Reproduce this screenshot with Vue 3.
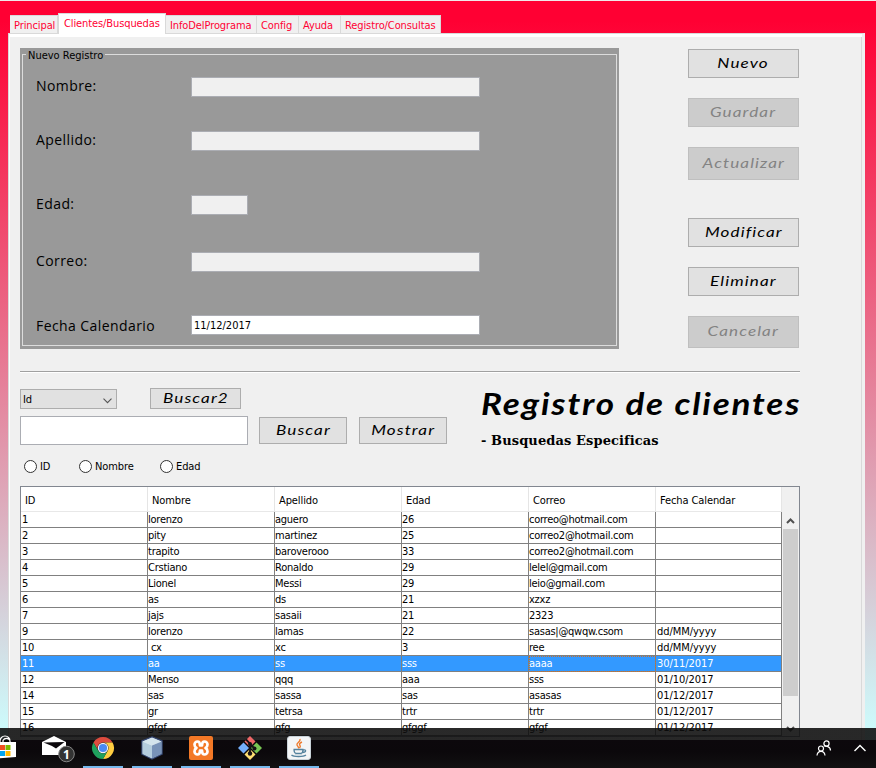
<script setup>
import { ref } from 'vue'

const tabs = [
  { label: 'Principal', w: 48 },
  { label: 'Clientes/Busquedas', w: 108, active: true },
  { label: 'InfoDelPrograma', w: 91 },
  { label: 'Config', w: 42 },
  { label: 'Ayuda', w: 42 },
  { label: 'Registro/Consultas', w: 100 },
]
const fields = [
  { label: 'Nombre:', value: '' },
  { label: 'Apellido:', value: '' },
  { label: 'Edad:', value: '', short: true },
  { label: 'Correo:', value: '' },
  { label: 'Fecha Calendario', value: '11/12/2017', enabled: true },
]
const actions = [
  { label: 'Nuevo' },
  { label: 'Guardar', off: true },
  { label: 'Actualizar', off: true },
  { label: 'Modificar' },
  { label: 'Eliminar' },
  { label: 'Cancelar', off: true },
]
const columns = ['ID', 'Nombre', 'Apellido', 'Edad', 'Correo', 'Fecha Calendar']
const rows = [
  ['1', 'lorenzo', 'aguero', '26', 'correo@hotmail.com', ''],
  ['2', 'pity', 'martinez', '25', 'correo2@hotmail.com', ''],
  ['3', 'trapito', 'baroverooo', '33', 'correo2@hotmail.com', ''],
  ['4', 'Crstiano', 'Ronaldo', '29', 'lelel@gmail.com', ''],
  ['5', 'Lionel', 'Messi', '29', 'leio@gmail.com', ''],
  ['6', 'as', 'ds', '21', 'xzxz', ''],
  ['7', 'jajs', 'sasaii', '21', '2323', ''],
  ['9', 'lorenzo', 'lamas', '22', 'sasas|@qwqw.csom', 'dd/MM/yyyy'],
  ['10', ' cx', 'xc', '3', 'ree', 'dd/MM/yyyy'],
  ['11', 'aa', 'ss', 'sss', 'aaaa', '30/11/2017'],
  ['12', 'Menso', 'qqq', 'aaa', 'sss', '01/10/2017'],
  ['14', 'sas', 'sassa', 'sas', 'asasas', '01/12/2017'],
  ['15', 'gr', 'tetrsa', 'trtr', 'trtr', '01/12/2017'],
  ['16', 'gfgf', 'gfg', 'gfggf', 'gfgf', '01/12/2017'],
]
const selected = ref(9)
</script>

<template>
  <div class="window">
    <nav class="tabs">
      <div v-for="t in tabs" :key="t.label" class="tab" :class="{ active: t.active }" :style="{ width: t.w + 'px' }">{{ t.label }}</div>
    </nav>
    <main class="pane">
      <section class="top">
        <div class="form-box">
          <div class="form-frame">
            <span class="legend">Nuevo Registro</span>
            <div class="form-grid">
              <template v-for="f in fields" :key="f.label">
                <label class="lbl" :class="{ low: f.enabled }">{{ f.label }}</label>
                <div class="field" :class="{ short: f.short, enabled: f.enabled }">{{ f.value }}</div>
              </template>
            </div>
          </div>
        </div>
        <div class="actions">
          <button v-for="a in actions" :key="a.label" class="btn" :class="{ off: a.off }"><span>{{ a.label }}</span></button>
        </div>
      </section>
      <hr class="sep" />
      <section class="search">
        <div class="search-left">
          <div class="line1">
            <div class="combo">Id
              <svg width="9" height="6" viewBox="0 0 9 6"><path d="M.5 .7 4.5 4.7 8.5 .7" fill="none" stroke="#555" stroke-width="1.1" /></svg>
            </div>
            <button class="btn b2"><span>Buscar2</span></button>
          </div>
          <div class="line2">
            <div class="query"></div>
            <button class="btn"><span>Buscar</span></button>
            <button class="btn"><span>Mostrar</span></button>
          </div>
          <div class="radios">
            <label class="r1"><i></i>ID</label>
            <label class="r2"><i></i>Nombre</label>
            <label><i></i>Edad</label>
          </div>
        </div>
        <div class="titles">
          <h1>Registro de clientes</h1>
          <h2>- Busquedas Especificas</h2>
        </div>
      </section>
      <section class="table">
        <div class="grid">
          <div class="head">
            <div v-for="c in columns" :key="c">{{ c }}</div>
          </div>
          <div v-for="(r, i) in rows" :key="i" class="row" :class="{ sel: i === selected }">
            <div v-for="(c, j) in r" :key="j" :class="{ focus: i === selected && j === 4 }">{{ c }}</div>
          </div>
          <div class="row last"><div v-for="c in columns" :key="c"></div></div>
        </div>
        <div class="scroll">
          <svg width="9" height="6" viewBox="0 0 9 6"><path d="M1 5 4.5 1.5 8 5" fill="none" stroke="#505050" stroke-width="2" /></svg>
          <div class="thumb"></div>
          <svg class="down" width="9" height="6" viewBox="0 0 9 6"><path d="M1 1 4.5 4.5 8 1" fill="none" stroke="#505050" stroke-width="2" /></svg>
        </div>
      </section>
    </main>

    <footer class="taskbar">
      <div class="app store">
        <svg width="26" height="26" viewBox="0 0 26 26">
          <path d="M10 8V6a5 5 0 0 1 10 0v2M13 8V5.500a4 4 0 0 1 7 0" fill="none" stroke="#fff" stroke-width="1.2" />
          <path d="M1 7h25v15l-25 2z" fill="#fff" />
          <path d="M9 10h6v5H9z" fill="#f25022" /><path d="M15.500 10h5v5h-5z" fill="#7fba00" />
          <path d="M9 16h6v5H9z" fill="#00a4ef" /><path d="M15.500 16h5v5h-5z" fill="#ffb900" />
        </svg>
      </div>
      <div class="app mail">
        <svg width="34" height="30" viewBox="0 0 34 30">
          <path d="M0 9 12 3 24 9V22H0z" fill="#fff" />
          <path d="M1.500 9.500 22.500 9 14 15.500 10 13z" fill="#0b080c" />
          <circle cx="24.500" cy="21" r="7.800" fill="#333" stroke="#858585" stroke-width="1" />
          <text x="24.300" y="25.500" text-anchor="middle" class="badge">1</text>
        </svg>
      </div>
      <div class="app open">
        <svg width="24" height="24" viewBox="-12 -12 24 24">
          <path d="M-9.530 -5.500A11 11 0 0 1 9.530 -5.500H0A5.500 5.500 0 0 0 -4.760 2.750z" fill="#dd4b3e" />
          <path d="M9.530 -5.500A11 11 0 0 1 0 11L4.760 2.750A5.500 5.500 0 0 0 0 -5.500z" fill="#ffcd41" />
          <path d="M0 11A11 11 0 0 1 -9.530 -5.500L-4.760 2.750A5.500 5.500 0 0 0 4.760 2.750z" fill="#1fa15d" />
          <circle r="5.200" fill="#f4f4f4" /><circle r="4.100" fill="#4a8af4" />
        </svg>
      </div>
      <div class="app open">
        <svg width="24" height="24" viewBox="0 0 24 24">
          <path d="M12 1 22 5V18L12 23 2 18V5z" fill="#fff" stroke="#33456f" stroke-width="1.500" />
          <path d="M12 1.500 21.500 5.500 12 9.500 2.500 5.500z" fill="#d4e5ed" />
          <path d="M2.500 5.500 12 9.500V22.500L2.500 18z" fill="#b4cddd" />
          <path d="M12 9.500 21.500 5.500V18L12 22.500z" fill="#7893b8" />
        </svg>
      </div>
      <div class="app open">
        <svg width="24" height="24" viewBox="0 0 24 24">
          <rect width="24" height="24" rx="2" fill="#f37826" />
          <path d="M8.500 5.500a3 3 0 0 0-3 3c0 2 1 3 2 3.500-1 .5-2 1.500-2 3.500a3 3 0 0 0 3 3c2 0 2.500-1.500 2.500-4h2c0 2.500.5 4 2.500 4a3 3 0 0 0 3-3c0-2-1-3-2-3.500 1-.5 2-1.500 2-3.500a3 3 0 0 0-3-3c-2 0-2.500 1.500-2.500 4h-2c0-2.500-.5-4-2.500-4z" fill="none" stroke="#fff" stroke-width="2.700" stroke-linejoin="round" />
        </svg>
      </div>
      <div class="app open">
        <svg width="24" height="24" viewBox="0 0 24 24">
          <path d="M12 0 17.500 5.500 12 11 6.500 5.500z" fill="#f06868" />
          <path d="M18.500 6.500 24 12 18.500 17.500 13 12z" fill="#78c553" />
          <path d="M12 13 17.500 18.500 12 24 6.500 18.500z" fill="#ffdf72" />
          <path d="M5.500 6.500 11 12 5.500 17.500 0 12z" fill="#74aefb" />
          <path d="M8 3.500 12 7.500V17M12 8 16.500 12.500" fill="none" stroke="#151015" stroke-width="1.800" />
          <circle cx="12" cy="8" r="2" fill="#151015" /><circle cx="16.500" cy="12.500" r="2" fill="#151015" /><circle cx="12" cy="17.500" r="2.200" fill="#151015" />
        </svg>
      </div>
      <div class="app open">
        <svg width="24" height="24" viewBox="0 0 24 24">
          <rect x=".5" y=".5" width="23" height="23" rx="2.500" fill="#f3f5f6" stroke="#c9d2d8" />
          <path d="M13 3c1 3-4 4-3 6 .5 1.200 2 2 1.500 3.500M15 6c-2.500 1-3 2-2 3.500.8 1.200 0 2-.5 2.500" fill="none" stroke="#ee7b2d" stroke-width="1.400" />
          <path d="M6.500 13.500h10M7 13.500c0 2 .5 3.500 2 4h5c1.500-.5 2-2 2-4M16.500 14c3-.8 3 2.300-1 2.500M4.500 19c2 2 12 2 14.500 0M8 17.500h7" fill="none" stroke="#54829d" stroke-width="1.300" />
        </svg>
      </div>
      <div class="tray">
        <svg width="16" height="16" viewBox="0 0 16 16" fill="none" stroke="#fff" stroke-width="1.200">
          <circle cx="10.500" cy="3.500" r="2.600" /><path d="M8.500 6.500C9.500 6 14.500 6 14.500 10.500" />
          <circle cx="5" cy="8.500" r="2.500" /><path d="M1 15.500C1.500 10 8.500 10 9 15.500" />
        </svg>
        <svg width="14" height="8" viewBox="0 0 14 8"><path d="M1.500 7 7 1.500 12.500 7" fill="none" stroke="#fff" stroke-width="1.400" /></svg>
      </div>
    </footer>
  </div>
</template>

<style>
body { background: #0c080c; }
</style>

<style scoped>
* { box-sizing: border-box; }
.window {
  position: relative;
  height: 768px;
  overflow: hidden;
  padding: 13px 11px 0 8px;
  font: 11px/14px "DejaVu Sans Condensed", "DejaVu Sans", sans-serif;
  font-stretch: condensed;
  letter-spacing: -0.25px;
  color: #000;
  border-top: 1px solid #f0e8ea;
  background: linear-gradient(#ff0033 20px, #ccffff 740px);
}
.tabs { display: flex; align-items: flex-end; height: 20px; padding-left: 2px; margin-top: -1px; }
.tab {
  height: 18px;
  background: #f0f0f0;
  border: 1px solid #d9d9d9;
  border-width: 1px 1px 0 0;
  padding-left: 4px;
  color: #ff0033;
  letter-spacing: -0.1px;
  line-height: 19px;
  white-space: nowrap;
}
.tab.active { height: 21px; margin-bottom: -1px; padding-left: 5px; background: #fff; line-height: 19px; border-left-width: 1px; }
.pane {
  height: 735px;
  background: #f0f0f0;
  border-top: 1px solid #d9d9d9;
  border-left: 1px solid #d9d9d9;
  border-right: 3px solid #f0f0f0;
  box-shadow: inset 0 3px #fff, inset 1px 0 #fff, inset -1px 0 #d9d9d9;
  padding: 14px 0 0 11px;
}
.top { display: flex; height: 301px; }
.form-box { width: 599px; height: 301px; background: #999; padding: 6px 2px 3px; }
.form-frame { height: 292px; border: 1px solid #dcdcdc; }
.legend { display: block; width: max-content; height: 14px; margin: -7px 0 0 3px; padding: 0 2px; background: #999; line-height: 15px; letter-spacing: 0; }
.form-grid { display: grid; grid-template-columns: 155px 289px; grid-template-rows: 54px 64px 57px 63px 20px; padding: 15px 0 0 13px; align-items: start; }
.lbl { font: 500 14px/18px "Open Sans", "Noto Sans", sans-serif; letter-spacing: .42px; }
.lbl.low { line-height: 22px; }
.field { height: 20px; border: 1px solid #abadb3; background: #f0f0f0; padding-left: 2px; line-height: 19px; letter-spacing: 0; }
.field.short { width: 57px; }
.field.enabled { background: #fff; }
.actions { display: grid; grid-template-rows: 49px 49px 71px 49px 49px 32px; width: 111px; margin-left: 69px; padding-top: 1px; }
.btn {
  height: 29px;
  padding: 0 0 2px;
  border: 1px solid #adadad;
  background: #e1e1e1;
  color: #000;
  font: italic 14px/20px Lato, sans-serif;
  letter-spacing: .9px;
}
.btn span { display: inline-block; transform: scaleX(1.22); }
.btn.off { background: #ccc; border-color: #bfbfbf; color: #838383; }
.actions .btn:nth-child(3) { height: 33px; }
.actions .btn:nth-child(6) { height: 32px; }
.sep { width: 780px; height: 2px; margin: 22px 0 0; border: 0; background: #a0a0a0; border-bottom: 1px solid #fff; }
.search { display: flex; height: 113px; padding-top: 15px; }
.search-left { width: 461px; }
.line1 { display: flex; align-items: flex-end; height: 21px; }
.combo { display: flex; align-items: center; justify-content: space-between; width: 97px; height: 20px; border: 1px solid #adadad; background: #e1e1e1; padding: 1px 4px 0 2px; }
.combo svg { margin-top: 3px; }
.btn.b2 { width: 91px; height: 21px; margin-left: 33px; line-height: 18px; }
.line2 { display: flex; align-items: center; height: 29px; margin-top: 7px; }
.query { width: 228px; height: 29px; background: #fff; border: 1px solid #abadb3; }
.line2 .btn { width: 88px; height: 27px; margin-left: 11px; }
.line2 .btn + .btn { margin-left: 12px; }
.radios { display: flex; margin-top: 14px; padding-left: 4px; letter-spacing: -0.1px; }
.radios label { display: flex; align-items: center; gap: 3px; line-height: 15px; }
.radios .r1 { width: 55px; }
.radios .r2 { width: 81px; }
.radios i { width: 13px; height: 13px; border: 1px solid #333; border-radius: 50%; background: #fff; }
h1 { width: max-content; margin: -7px 0 0; font: italic 700 31px/44px Lato, sans-serif; letter-spacing: 1.6px; white-space: nowrap; transform: scaleX(1.13); transform-origin: left; }
h2 { margin: 7px 0 0; font: bold 13px/18px "DejaVu Serif", serif; letter-spacing: .1px; white-space: nowrap; }
.table { display: flex; width: 780px; height: 251px; border: 1px solid #828790; overflow: hidden; }
.grid { width: 761px; background: #fff; flex: none; }
.head, .row { display: grid; grid-template-columns: 127px 127px 127px 127px 127px 126px; }
.head { height: 25px; border-bottom: 1px solid #e8e8e8; letter-spacing: -0.1px; }
.head div { padding-left: 4px; line-height: 27px; border-right: 1px solid #e5e5e5; }
.row { height: 16px; }
.row div { border-right: 1px solid #808080; border-bottom: 1px solid #808080; padding-left: 0; line-height: 15px; white-space: pre; }
.row div:first-child { padding-left: 1px; }
.row div:last-child { padding-left: 1px; letter-spacing: -0.05px; }
.row.sel div { background: #3399ff; color: #fff; }
.row.sel .focus { outline: 1px dotted #c8702c; outline-offset: -1px; }
.scroll { width: 15px; display: flex; flex-direction: column; align-items: center; margin-left: 1px; padding-top: 31px; }
.thumb { width: 15px; height: 167px; margin-top: 5px; background: #cdcdcd; }
.scroll .down { margin-top: 30px; }
.taskbar {
  position: absolute;
  left: 0;
  right: 0;
  bottom: 0;
  height: 40px;
  display: flex;
  background: linear-gradient(rgba(12, 12, 12, .88) 12px, #0c080c 12px, #0b080b 60%, #121112);
}
.app { width: 40px; height: 40px; margin-right: 9px; display: flex; align-items: center; justify-content: center; flex: none; }
.app.open { border-bottom: 2px solid #76b9ed; padding-top: 2px; }
.store { width: 34px; margin-right: 0; justify-content: flex-start; margin-left: -10px; }
.mail { width: 34px; margin: 0 7px 0 18px; }
.badge { font: bold 12px "Open Sans", sans-serif; fill: #fff; }
.tray { margin-left: auto; display: flex; align-items: center; gap: 21px; padding-right: 9px; }
</style>
